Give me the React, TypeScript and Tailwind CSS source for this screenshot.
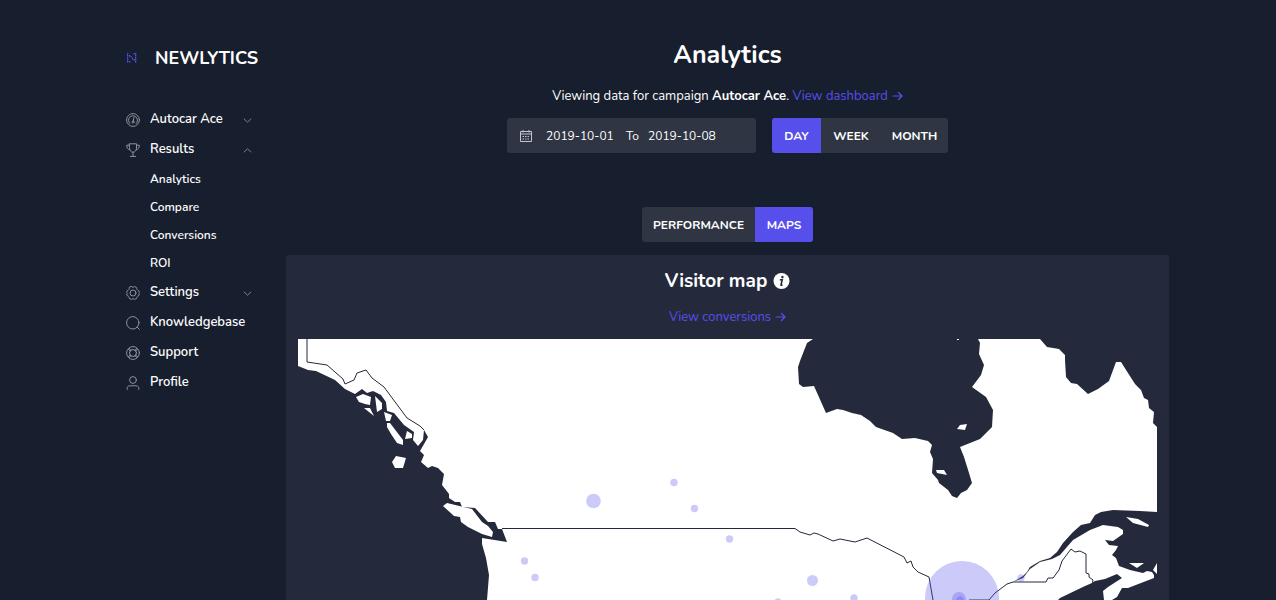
import type { ReactNode } from 'react';

const navIcons: Record<string, ReactNode> = {
    gauge: (
        <>
            <circle cx="7" cy="7" r="6.4" />
            <path d="M3.7 10.4A4.5 4.5 0 1 1 10.3 10.4M7.9 4.6 7.2 8" />
            <circle cx="7" cy="9" r="1" />
        </>
    ),
    trophy: (
        <>
            <path d="M3.5.8h7v4.4c0 2.2-1.4 4-3.5 4s-3.5-1.8-3.5-4zM7 9.2v4M4.3 13.4h5.4" />
            <path d="M3.5 2.2H.7c0 2.6 1 4.2 3.2 4.6M10.5 2.2h2.8c0 2.6-1 4.2-3.2 4.6" />
        </>
    ),
    gear: (
        <>
            <path d="M5.3.6C6 1.4 8 1.4 8.7.6L10.7 1.7C10.5 2.9 11.3 4.2 12.6 4.5L13.4 6.2C12.5 6.7 12.5 7.5 13.4 8L12.6 9.8C11.3 9.9 10.5 11.2 10.8 12.3L8.7 13.4C8 12.6 6 12.6 5.3 13.4L3.2 12.3C3.5 11.2 2.7 9.9 1.4 9.8L.6 8C1.5 7.5 1.5 6.7.6 6.2L1.4 4.5C2.7 4.2 3.5 2.9 3.3 1.7Z" />
            <circle cx="7" cy="7" r="3" />
        </>
    ),
    search: (
        <>
            <circle cx="6.8" cy="6.8" r="6.2" />
            <path d="m11.2 11.2 2.2 2.2" />
        </>
    ),
    lifebuoy: (
        <>
            <circle cx="7" cy="7" r="6.4" />
            <circle cx="7" cy="7" r="3.5" />
            <path d="m2.5 3.5 2 1.5M3.5 2.5 5 4.5M11.5 3.5l-2 1.5M10.5 2.5 9 4.5M2.5 10.5l2-1.5M3.5 11.5 5 9.5M11.5 10.5l-2-1.5M10.5 11.5 9 9.5" />
        </>
    ),
    user: (
        <>
            <circle cx="7" cy="4" r="3.4" />
            <path d="M1.2 13.5v-1.2c0-1.5 1-2.5 2.5-2.5h6.6c1.5 0 2.5 1 2.5 2.5v1.2" />
        </>
    ),
};

const navigation = [
    { name: 'Autocar Ace', icon: 'gauge', arrow: 'down' },
    { name: 'Results', icon: 'trophy', arrow: 'up', children: ['Analytics', 'Compare', 'Conversions', 'ROI'] },
    { name: 'Settings', icon: 'gear', arrow: 'down' },
    { name: 'Knowledgebase', icon: 'search' },
    { name: 'Support', icon: 'lifebuoy' },
    { name: 'Profile', icon: 'user' },
];

const logoDots = [
    [1, 0], [1, 2], [1, 4], [1, 6], [1, 8],
    [3, 2], [3, 8],
    [4.5, 3], [6, 5],
    [7.5, 0], [7.5, 6],
    [9, 0], [9, 2], [9, 4], [9, 6], [9, 8],
];

const islands = [
    '356,397 363,394 371,397 370,405 365,404 359,402',
    '364,408 370,408 374,416',
    '375,396 382,403 382,409 377,412',
    '384,412 392,415 390,421 386,421',
    '387,423 390,423 403,440 403,445 397,443 391,434 387,427',
    '407,431 412,434 412,438 405,439',
    '396,456 406,458 403,468 395,468 392,462',
    '447,503 472,509 482,522 488,526 493,532 492,537 482,534 468,527 461,522 460,517 454,516 443,506',
    '957,429 960,425 967,424 965,430',
    '936,470 944,470 947,475 937,473',
    '957,339 959,339 959,340 957,340',
    '1126,517 1138,519 1149,525 1148,527 1133,523',
    '1129,563 1144,563 1137,568',
    '1153,570 1157,563 1157,574',
];

const water = [
    // Pacific
    '298,366 308,370 316,371 335,380 345,389 355,394 362,389 367,393 373,391 381,395 386,402 387,411 394,413 404,425 414,432 413,440 418,446 423,440 424,430 428,437 420,451 424,455 421,462 428,468 432,466 438,468 444,474 442,485 449,494 449,498 455,502 460,502 462,507 475,508 488,522 495,522 498,529 502,529 507,542 482,538 482,544 486,558 489,575 487,600 298,600',
    // Hudson Bay
    '813,339 807,343 800,361 798,367 799,384 803,387 814,386 826,413 837,409 843,410 852,413 861,415 870,421 876,427 893,433 902,439 915,438 928,441 932,445 930,452 933,459 932,473 938,480 939,483 948,490 952,496 957,498 961,493 967,490 972,483 969,473 964,457 960,447 980,439 992,427 993,410 986,397 972,387 981,375 984,365 979,354 980,343 978,339',
    // Labrador Sea
    '1040,339 1047,347 1059,349 1065,355 1065,360 1066,377 1071,383 1077,384 1088,394 1098,389 1109,381 1116,362 1121,362 1135,384 1141,390 1144,398 1148,400 1149,408 1154,412 1153,423 1157,427 1157,339',
    // Gulf of St. Lawrence
    '1157,512 1140,511 1113,510 1101,512 1095,515 1090,523 1081,525 1073,532 1063,543 1057,552 1050,558 1040,561 1030,567 1027,572 1023,576 1013,582 1023,578 1030,569 1040,562 1052,559 1060,555 1073,540 1090,530 1103,525 1118,527 1123,530 1123,534 1113,541 1105,540 1109,545 1118,546 1116,550 1112,555 1116,558 1119,566 1130,570 1143,573 1147,571 1152,572 1154,575 1154,578 1128,588 1122,588 1117,597 1112,600 1157,600',
    // Bay of Fundy
    '1058,600 1060,598 1085,586 1092,583 1095,581 1105,579 1117,574 1122,578 1108,587 1103,591 1104,600',
];

const borders = [
    '307,339 307,362 327,365 343,379 345,384 354,380 357,373 366,370 372,378 384,387 407,418 420,426 424,430',
    '502,528.5 795,528.5 800,532 810,535 814,533 818,534 833,541 840,539 855,542 867,538 904,557 907,563 911,561 913,567 918,572 929,577 933,600',
    '969,600 989,600 995,593 1007,584 1013,582 1046,582 1048,578 1053,578 1059,570 1062,561 1071,549 1075,552 1080,551 1086,554 1086,573 1089,574 1089,577 1093,580 1092,586',
];

const visitors = [
    { x: 593.5, y: 501, r: 7.3 },
    { x: 674, y: 482.5, r: 3.7 },
    { x: 694.5, y: 508.5, r: 3.7 },
    { x: 729.5, y: 539, r: 3.7 },
    { x: 524.5, y: 561, r: 3.7 },
    { x: 535, y: 577.5, r: 3.7 },
    { x: 812.5, y: 580.5, r: 5.5 },
    { x: 854, y: 598, r: 3.7 },
    { x: 778, y: 602, r: 3.7 },
    { x: 962, y: 598, r: 37 },
    { x: 959, y: 599, r: 7 },
    { x: 960, y: 600, r: 3.7 },
    { x: 1021, y: 578, r: 3.7 },
];

function ArrowRight() {
    return (
        <svg className="inline-block ml-1 mb-0.5" width="11" height="10" viewBox="0 0 11 10" fill="none" stroke="currentColor" strokeWidth="1.2" strokeLinecap="round" strokeLinejoin="round" aria-hidden="true">
            <path d="M1 5h9M6.5 1.5 10 5 6.5 8.5" />
        </svg>
    )
}

function Sidebar() {
    return (
        <aside className="w-[179px] shrink-0 pl-[19px] pt-11">
            <a href="#" className="flex items-center gap-[18px] h-7">
                <svg width="11" height="10" viewBox="0 0 11 10" className="fill-[#574fec]" aria-hidden="true">
                    {logoDots.map(([x, y]) => (
                        <rect key={`${x}-${y}`} x={x} y={y} width="1.3" height="1.5" />
                    ))}
                </svg>
                <span className="text-lg font-bold">NEWLYTICS</span>
            </a>
            <nav className="mt-[33px]">
                <ul>
                    {navigation.map((item) => (
                        <li key={item.name}>
                            <a href="#" className="flex items-center h-[30px] pr-[34px]">
                                <svg width="14" height="14" viewBox="0 0 14 14" fill="none" stroke="#8d929c" strokeLinecap="round" strokeLinejoin="round" aria-hidden="true">
                                    {navIcons[item.icon]}
                                </svg>
                                <span className="ml-2.5 grow text-[13px] font-semibold">{item.name}</span>
                                {item.arrow && (
                                    <svg width="9" height="5" viewBox="0 0 9 5" fill="none" stroke="#7b818c" aria-hidden="true">
                                        <path d={item.arrow === 'down' ? 'M.8.7 4.5 4.2 8.2.7' : 'M.8 4.3 4.5.8 8.2 4.3'} />
                                    </svg>
                                )}
                            </a>
                            {item.children && (
                                <ul className="pb-px">
                                    {item.children.map((child) => (
                                        <li key={child}>
                                            <a href="#" className="flex items-center h-7 pl-6 text-xs font-semibold">{child}</a>
                                        </li>
                                    ))}
                                </ul>
                            )}
                        </li>
                    ))}
                </ul>
            </nav>
        </aside>
    )
}

function VisitorMap() {
    return (
        <svg className="block w-full h-auto" viewBox="298 339 859 261" role="img" aria-label="Visitor map">
            <rect x="298" y="339" width="859" height="261" fill="#fff" />
            {water.map((points) => (
                <polygon key={points} points={points} fill="#242a3c" />
            ))}
            {islands.map((points) => (
                <polygon key={points} points={points} fill="#fff" />
            ))}
            {borders.map((points) => (
                <polyline key={points} points={points} fill="none" stroke="#242a3c" />
            ))}
            {visitors.map(({ x, y, r }) => (
                <circle key={`${x}-${y}`} cx={x} cy={y} r={r} fill="#574fec" fillOpacity="0.3" />
            ))}
        </svg>
    )
}

export default function App() {
    return (
        <div className="min-h-screen bg-[#171e2d] text-white font-['Nunito','Lato',sans-serif]">
            <div className="mx-auto flex w-full max-w-[1062px]">
                <Sidebar />
                <main className="flex min-w-0 grow flex-col items-center pt-10">
                    <h1 className="text-[25px] leading-[30px] font-bold">Analytics</h1>
                    <p className="mt-4 text-[13px] leading-5">
                        Viewing data for campaign <b className="font-bold">Autocar Ace</b>.{' '}
                        <a href="#" className="text-[#574fec]">View dashboard<ArrowRight /></a>
                    </p>
                    <div className="mt-3 flex gap-4">
                        <div className="flex h-[35px] w-[249px] items-center rounded-[3px] bg-[#2f3542] pl-[13px] text-xs">
                            <svg width="12" height="12" viewBox="0 0 12 12" fill="none" stroke="#c3c6cc" aria-hidden="true">
                                <path d="M.5 1.5h11v10H.5zM.5 4h11M3 0v2.5M9 0v2.5" />
                                <path d="M2.5 6.5h7M2.5 9h7" strokeDasharray="1.5 1" />
                            </svg>
                            <input aria-label="Start date" defaultValue="2019-10-01" className="ml-3.5 w-20 bg-transparent outline-none" />
                            <span className="w-[22px]">To</span>
                            <input aria-label="End date" defaultValue="2019-10-08" className="w-20 bg-transparent outline-none" />
                        </div>
                        <div className="flex h-[35px] overflow-hidden rounded-[3px] bg-[#2f3542] text-xs font-bold">
                            <button className="w-[49px] bg-[#574fec]">DAY</button>
                            <button className="w-[60px]">WEEK</button>
                            <button className="w-[67px]">MONTH</button>
                        </div>
                    </div>
                    <div className="mt-[54px] flex h-[35px] overflow-hidden rounded-[3px] bg-[#2f3542] text-xs font-bold">
                        <button className="w-[113px]">PERFORMANCE</button>
                        <button className="w-[58px] bg-[#574fec]">MAPS</button>
                    </div>
                    <section className="mt-[13px] flex w-full flex-col items-center rounded-t-[3px] bg-[#242a3c] px-3 pt-3">
                        <h2 className="flex items-center gap-1.5 text-[19px] leading-7 font-bold">
                            Visitor map
                            <svg width="17" height="17" viewBox="0 0 17 17" aria-hidden="true">
                                <circle cx="8.5" cy="8" r="8" fill="#fff" />
                                <path d="M6.8 7 9.3 6.5 8 11.8c-.1.7.5.6 1.5-.2" fill="none" stroke="#242a3c" strokeWidth="1.6" />
                                <circle cx="9.4" cy="3.9" r="1.2" fill="#242a3c" />
                            </svg>
                        </h2>
                        <a href="#" className="mt-3 mb-3 text-[13px] leading-5 text-[#574fec]">View conversions<ArrowRight /></a>
                        <VisitorMap />
                    </section>
                </main>
            </div>
        </div>
    )
}
